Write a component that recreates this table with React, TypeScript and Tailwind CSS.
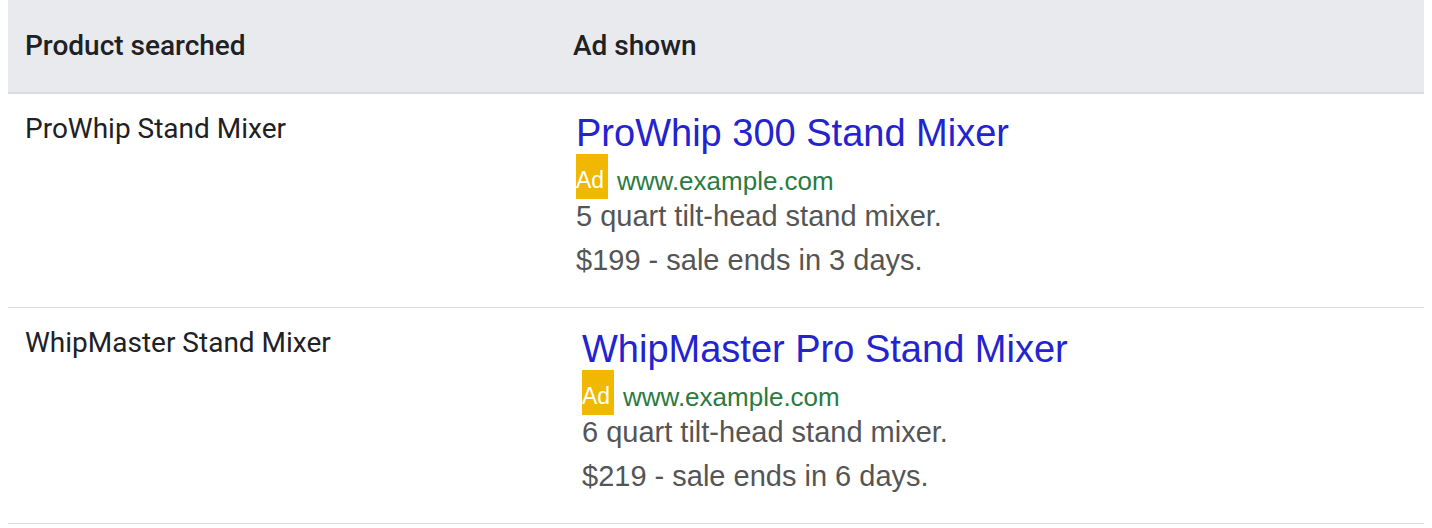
import React from "react";

type Row = {
  product: string;
  title: string;
  desc: string;
  price: string;
  shift: string;
};

const rows: Row[] = [
  {
    product: "ProWhip Stand Mixer",
    title: "ProWhip 300 Stand Mixer",
    desc: "5 quart tilt-head stand mixer.",
    price: "$199 - sale ends in 3 days.",
    shift: "ml-[19px] mt-0",
  },
  {
    product: "WhipMaster Stand Mixer",
    title: "WhipMaster Pro Stand Mixer",
    desc: "6 quart tilt-head stand mixer.",
    price: "$219 - sale ends in 6 days.",
    shift: "ml-[25px] mt-[2px]",
  },
];

function Ad({ r }: { r: Row }) {
  return (
    <div className={`flex flex-col ${r.shift}`} style={{ fontFamily: '"Liberation Sans", Arial, sans-serif' }}>
      <div className="text-[38px] leading-[40px] text-[#2323cf] whitespace-nowrap">{r.title}</div>
      <div className="flex items-end mt-[1px] h-[45px]">
        <div className="w-[32px] h-[45px] bg-[#f0b800] flex items-end pb-[7px]">
          <span className="text-[23px] leading-none text-white">Ad</span>
        </div>
        <span className="ml-[9px] text-[26px] leading-none pb-[5px] text-[#2b7a3f] whitespace-nowrap">www.example.com</span>
      </div>
      <div className="-mt-[5px] text-[29px] leading-[44px] text-[#555555] whitespace-nowrap">
        <div>{r.desc}</div>
        <div>{r.price}</div>
      </div>
    </div>
  );
}

export default function App() {
  return (
    <div className="w-[1432px] h-[528px] bg-white px-2" style={{ fontFamily: 'Roboto, "Noto Sans", sans-serif' }}>
      <div className="w-[1416px]">
        <div className="flex h-[92px] bg-[#e8eaed] items-center border-b-2 border-[#dadce0] box-content text-[28px] font-medium text-[#202124]">
          <div className="w-[549px] pl-[17px]">Product searched</div>
          <div className="pl-[16px]">Ad shown</div>
        </div>
        {rows.map((r) => (
          <div key={r.product} className="flex border-b border-[#dadce0] pt-[19px] pb-[25px]">
            <div className="w-[549px] pl-[17px] text-[28px] leading-8 text-[#202124]">{r.product}</div>
            <Ad r={r} />
          </div>
        ))}
      </div>
    </div>
  );
}
